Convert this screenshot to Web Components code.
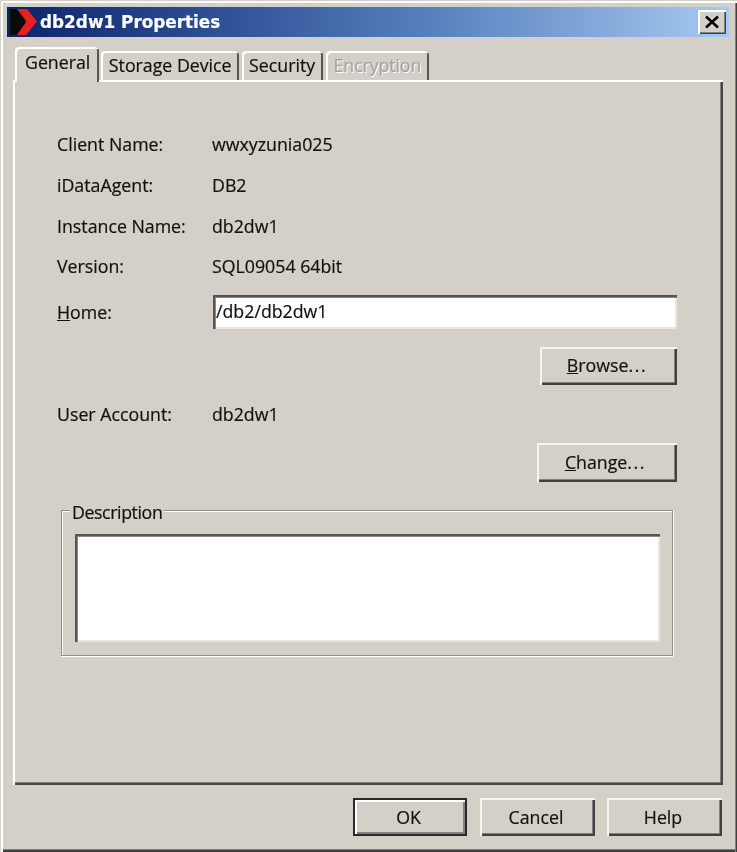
<!DOCTYPE html>
<html><head><meta charset="utf-8"><title>db2dw1 Properties</title>
<style>
html,body{margin:0;padding:0;background:#d4d0c8}
body{font:17.75px "Open Sans","Liberation Sans",sans-serif;color:#111;-webkit-text-stroke:.2px currentColor}
.dots{letter-spacing:1.6px}
</style></head><body>
<win-dialog>
  <win-titlebar slot="title">db2dw1 Properties</win-titlebar>
  <win-tabs slot="tabs">
    <win-tab active>General</win-tab>
    <win-tab>Storage Device</win-tab>
    <win-tab>Security</win-tab>
    <win-tab disabled>Encryption</win-tab>
  </win-tabs>
  <win-panel slot="panel">
    <win-row label="Client Name:">wwxyzunia025</win-row>
    <win-row label="iDataAgent:">DB2</win-row>
    <win-row label="Instance Name:">db2dw1</win-row>
    <win-row label="Version:">SQL09054 64bit</win-row>
    <win-row id="home" style="--row-h:34px;--row-mt:8px"><span slot="lbl"><u>H</u>ome:</span><win-field>/db2/db2dw1</win-field></win-row>
    <win-actions style="--mt:18px"><win-button style="--w:137px;--h:38px"><u>B</u>rowse<span class="dots">...</span></win-button></win-actions>
    <win-row label="User Account:" style="--row-h:40px;--row-mt:9px">db2dw1</win-row>
    <win-actions style="--mt:9px"><win-button style="--w:140px;--h:39px"><u>C</u>hange<span class="dots">...</span></win-button></win-actions>
    <win-group legend="Description"><win-field multiline></win-field></win-group>
  </win-panel>
  <win-button slot="footer" default style="--w:114px;--h:38px">OK</win-button>
  <win-button slot="footer" style="--w:115px;--h:38px;margin-right:-1px">Cancel</win-button>
  <win-button slot="footer" style="--w:115px;--h:38px">Help</win-button>
</win-dialog>
<script>
function def(name, html, init){
  customElements.define(name, class extends HTMLElement{
    constructor(){super();const r=this.attachShadow({mode:'open'});r.innerHTML=html;}
    connectedCallback(){ if(init) init(this); }
  });
}
def('win-dialog',`<style>
:host{display:flex;flex-direction:column;box-sizing:border-box;width:737px;height:852px;background:#d4d0c8;padding:7px 7px 0;
 box-shadow:inset 0 1px 0 #d4d0c8,inset 1px 0 0 #d4d0c8,inset 0 3px 0 #fff,inset 3px 0 0 #fff,inset -1px 0 0 #404040,inset -2px 0 0 #808080,inset 0 -2px 0 #404040,inset 0 -3px 0 #808080;filter:blur(.4px)}
.tabs{display:block;margin:10px -1px 0 8px;position:relative;z-index:1}
.panel{display:flex;flex:1 1 auto;margin:0 7px 0 6px;min-height:0}
.foot{display:flex;justify-content:flex-end;gap:13px;margin:13px 8px 16px 0}
</style><slot name="title"></slot><div class="tabs"><slot name="tabs"></slot></div><div class="panel"><slot name="panel"></slot></div><div class="foot"><slot name="footer"></slot></div>`);
def('win-titlebar',`<style>
:host{display:flex;align-items:center;height:30px;flex:none;margin-right:1px;padding:0 3px;background:linear-gradient(90deg,#0a246a 0%,#2f5196 30%,#5a82bf 60%,#a6caf0 100%);color:#fff;font:bold 16.85px "DejaVu Sans","Liberation Sans",sans-serif;box-sizing:border-box}
svg.logo{width:28px;height:28px;flex:none;margin-right:2px}
.t{flex:1}
.x{width:28px;height:24px;box-sizing:border-box;background:#d4d0c8;display:flex;align-items:center;justify-content:center;box-shadow:inset 2px 2px 0 #fff,inset -1px -1px 0 #404040,inset -2px -2px 0 #808080}
</style><svg class="logo" viewBox="0 0 28 28"><rect x="0" y="1" width="15" height="26" fill="#0a0a0a"/><path d="M7 1H17L27 13.500 16 27H7L16.500 13.500Z" fill="#e8201f"/></svg><span class="t"><slot></slot></span><span class="x"><svg width="16" height="14" viewBox="0 0 16 14"><path d="M2 1.500L14 12.500M14 1.500L2 12.500" stroke="#000" stroke-width="2.600" fill="none"/></svg></span>`);
def('win-tabs',`<style>:host{display:flex;align-items:flex-end;height:35px;margin-bottom:-2px}</style><slot></slot>`);
def('win-tab',`<style>
:host{display:flex;align-items:center;justify-content:center;box-sizing:border-box;height:29px;padding:0 7.5px 2px;margin-right:2.5px;margin-bottom:2px;background:#d4d0c8;border-radius:4px 4px 0 0;white-space:nowrap;
 box-shadow:inset 2px 2px 0 #fff,inset -2px 0 0 #555}
:host([active]){height:35px;margin:0 2px 0 0;padding:0 9px 6px 10px}
:host([disabled]){color:#a3a3a3;text-shadow:1px 1px 0 #fff;letter-spacing:-.1px;margin-left:1px}
</style><slot></slot>`);
def('win-panel',`<style>
:host{display:flex;flex-direction:column;flex:1;box-sizing:border-box;padding:44px 46px 0 44px;background:#d4d0c8;
 box-shadow:inset 2px 2px 0 #fff,inset -2px -2px 0 #454545,inset -3px -3px 0 #808080}
</style><slot></slot>`);
def('win-row',`<style>
:host{display:grid;grid-template-columns:155px 1fr;align-items:center;height:var(--row-h,40.67px);margin-top:var(--row-mt,0);white-space:nowrap}
</style><span id="l"><slot name="lbl"></slot></span><span><slot></slot></span>`,
el=>{const a=el.getAttribute('label'); if(a) el.shadowRoot.getElementById('l').textContent=a;});
def('win-actions',`<style>:host{display:flex;justify-content:flex-end;margin-top:var(--mt,0)}</style><slot></slot>`);
def('win-button',`<style>
:host{display:flex;align-items:center;justify-content:center;box-sizing:border-box;width:var(--w);height:var(--h);flex:none;padding:0 3px 1px 0;background:#d4d0c8;white-space:nowrap;
 box-shadow:inset 2px 2px 0 #f6f5f1,inset -2px -2px 0 #404040,inset -3px -3px 0 #808080}
:host([default]){box-shadow:inset 0 0 0 2px #2a2a2a,inset 4px 4px 0 #fff,inset -4px -4px 0 #808080}
</style><slot></slot>`);
def('win-field',`<style>
:host{display:block;box-sizing:border-box;height:34px;margin-left:1px;padding:5px 3px;background:#fff;line-height:22px;
 box-shadow:inset 2px 2px 0 #555,inset 3px 3px 0 #888,inset -2px -2px 0 #e8e6e0}
:host([multiline]){height:108px;margin:0}
</style><slot></slot>`);
def('win-group',`<style>
:host{display:block;position:relative;box-sizing:border-box;width:612px;height:146px;margin:28px 0 0 4px;padding:23px 12px 0 13px;
 border:1px solid #8f8d88;box-shadow:inset 1px 1px 0 #fff,0 1px 0 #fff,1px 0 0 #fff}
.legend{position:absolute;left:8px;top:-10px;padding:0 2px;background:#d4d0c8;line-height:22px;letter-spacing:-.4px}
</style><span class="legend" id="lg"></span><slot></slot>`,
el=>{el.shadowRoot.getElementById('lg').textContent=el.getAttribute('legend');});
</script>
</body></html>
